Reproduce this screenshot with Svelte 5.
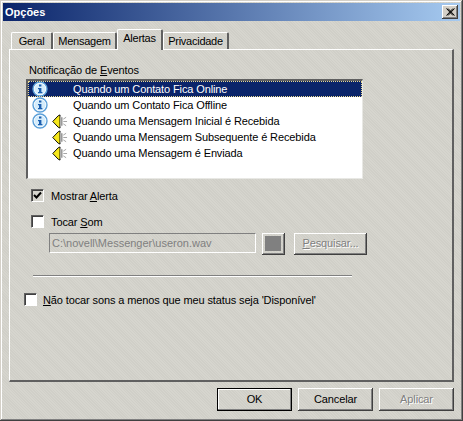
<script>
  const tabs = [
    { label: "Geral", width: 42, active: false },
    { label: "Mensagem", width: 64, active: false },
    { label: "Alertas", width: 46, active: true },
    { label: "Privacidade", width: 66, active: false },
  ];

  const events = [
    { text: "Quando um Contato Fica Online", info: true, sound: false },
    { text: "Quando um Contato Fica Offline", info: true, sound: false },
    { text: "Quando uma Mensagem Inicial é Recebida", info: true, sound: true },
    { text: "Quando uma Mensagem Subsequente é Recebida", info: false, sound: true },
    { text: "Quando uma Mensagem é Enviada", info: false, sound: true },
  ];
</script>

<div class="window">
  <div class="titlebar">
    <span class="title">Opções</span>
    <button class="close" aria-label="Fechar">
      <svg width="9" height="8" viewBox="0 0 9 8"><path d="M0.5 0.5 L7 7.5 M2 0.5 L8.5 7.5 M7 0.5 L0.5 7.5 M8.5 0.5 L2 7.5" stroke="#000" stroke-width="1" fill="none" /></svg>
    </button>
  </div>

  <div class="tabs">
    {#each tabs as tab}
      <div class="tab" class:active={tab.active} style="width: {tab.width}px">{tab.label}</div>
    {/each}
  </div>

  <div class="panel">
    <div class="group-label">Notificação de <u>E</u>ventos</div>
    <ul class="list">
      {#each events as ev, i}
        <li class:selected={i === 0}>
          <span class="slot info-slot">
            {#if ev.info}
              <svg width="16" height="16" viewBox="0 0 16 16">
                <circle cx="8" cy="8" r="7" fill="#fff" stroke="#5a9fd8" stroke-width="1.4" />
                <circle cx="8" cy="8" r="5.6" fill="#d4ecfb" />
                <rect x="7" y="3.5" width="2.4" height="2" fill="#1c5fb0" />
                <path d="M6 7h3.4v4h1v1.2h-4.4v-1.2h1v-2.8h-1z" fill="#1c5fb0" />
              </svg>
            {/if}
          </span>
          <span class="slot sound-slot">
            {#if ev.sound}
              <svg width="17" height="17" viewBox="0 0 17 17">
                <path d="M0.8 8.5 L6.5 2.5 L8.5 1.5 V15.5 L6.5 14.5 Z" fill="#f7e81c" stroke="#000" stroke-width="1" />
                <path d="M9.5 3 V14" stroke="#d8d8d8" stroke-width="1" />
                <path d="M10.5 4 V13" stroke="#606060" stroke-width="1" />
                <path d="M12 6 L15 4 M12 8.5 H16 M12 11 L15 13" stroke="#a0a0a0" stroke-width="1" fill="none" />
              </svg>
            {/if}
          </span>
          <span class="item-text">{ev.text}</span>
        </li>
      {/each}
    </ul>

    <label class="check first">
      <span class="box">
        <svg width="9" height="9" viewBox="0 0 9 9"><path d="M1 4 L3.5 6.5 L8 1.5" stroke="#000" stroke-width="2" fill="none" /></svg>
      </span>
      <span>Mostrar <u>A</u>lerta</span>
    </label>

    <label class="check second">
      <span class="box"></span>
      <span>Tocar <u>S</u>om</span>
    </label>

    <div class="sound-row">
      <div class="path">C:\novell\Messenger\useron.wav</div>
      <div class="swatch"><span></span></div>
      <div class="btn browse"><span class="disabled"><u>P</u>esquisar...</span></div>
    </div>

    <div class="sep"></div>

    <label class="check last">
      <span class="box"></span>
      <span><u>N</u>ão tocar sons a menos que meu status seja 'Disponível'</span>
    </label>
  </div>

  <div class="footer">
    <div class="btn default">OK</div>
    <div class="btn">Cancelar</div>
    <div class="btn"><span class="disabled">Aplicar</span></div>
  </div>
</div>

<style>
  :global(body) {
    margin: 0;
  }

  .window {
    box-sizing: border-box;
    width: 463px;
    height: 421px;
    padding: 3px;
    display: flex;
    flex-direction: column;
    background: repeating-linear-gradient(45deg, #d6d5ce 0 1px, #d0cfc8 1px 2px);
    box-shadow: inset -1px -1px 0 #404040, inset 1px 1px 0 #d4d0c8, inset -2px -2px 0 #808080, inset 2px 2px 0 #fff;
    font-family: "Liberation Sans", Arial, sans-serif;
    font-size: 11px;
    letter-spacing: -0.12px;
    color: #000;
  }

  .titlebar {
    height: 18px;
    flex: none;
    display: flex;
    align-items: center;
    justify-content: space-between;
    padding: 0 2px 0 2px;
    background: linear-gradient(90deg, #0a246a, #a6caf0);
    color: #fff;
  }

  .title {
    font-weight: bold;
    font-size: 11px;
    letter-spacing: 0;
  }

  .close {
    box-sizing: border-box;
    width: 16px;
    height: 14px;
    padding: 0;
    border: 0;
    display: flex;
    align-items: center;
    justify-content: center;
    background: #d4d0c8;
    box-shadow: inset -1px -1px 0 #404040, inset 1px 1px 0 #fff, inset -2px -2px 0 #808080;
  }

  .tabs {
    display: flex;
    align-items: flex-end;
    height: 28px;
    flex: none;
    padding-left: 8px;
  }

  .tab {
    box-sizing: border-box;
    height: 17px;
    padding-top: 2px;
    text-align: center;
    letter-spacing: -0.25px;
    border-top: 1px solid #fff;
    border-left: 1px solid #fff;
    border-right: 2px solid #606060;
    border-radius: 2px 2px 0 0;
  }

  .tab.active {
    height: 21px;
    padding-top: 2px;
    margin-bottom: -1px;
    position: relative;
    z-index: 1;
    background: repeating-linear-gradient(45deg, #d6d5ce 0 1px, #d0cfc8 1px 2px);
  }

  .panel {
    box-sizing: border-box;
    margin-left: 6px;
    width: 445px;
    height: 333px;
    flex: none;
    padding: 14px 16px 0;
    border-top: 1px solid #fff;
    border-left: 1px solid #fff;
    border-right: 2px solid #606060;
    border-bottom: 2px solid #606060;
  }

  .group-label {
    height: 15px;
    line-height: 13px;
    padding-left: 3px;
  }

  .list {
    box-sizing: border-box;
    list-style: none;
    margin: 0;
    padding: 0;
    width: 337px;
    height: 100px;
    background: #fff;
    border: 2px solid #606060;
    border-right: 1px solid #e8e8e4;
    border-bottom: 1px solid #e8e8e4;
  }

  .list li {
    display: flex;
    align-items: center;
    height: 16px;
    padding-left: 4px;
  }

  .list li.selected {
    height: 16px;
    background: #0a246a;
    color: #fff;
    outline: 1px dotted #e8d890;
    outline-offset: -1px;
  }

  .slot {
    display: flex;
    width: 16px;
    height: 16px;
    flex: none;
  }

  .sound-slot {
    margin-left: 4px;
    margin-right: 5px;
  }

  .check {
    display: flex;
    align-items: center;
    gap: 7px;
    height: 13px;
  }

  .check.first {
    margin: 10px 0 0 5px;
  }

  .check.second {
    margin: 13px 0 0 5px;
  }

  .check.last {
    margin: 17px 0 0 -2px;
    gap: 6px;
  }

  .box {
    box-sizing: border-box;
    width: 13px;
    height: 13px;
    flex: none;
    display: flex;
    align-items: center;
    justify-content: center;
    background: #fff;
    border: 1px solid;
    border-color: #606060 #fff #fff #606060;
    box-shadow: inset 1px 1px 0 #404040;
  }

  .box:has(svg) {
    background: #d6d5ce;
  }

  .sound-row {
    display: flex;
    margin: 5px 0 0 23px;
    height: 22px;
  }

  .path {
    box-sizing: border-box;
    width: 207px;
    height: 20px;
    padding: 3px 2px;
    color: #808080;
    letter-spacing: 0;
    border: 1px solid;
    border-color: #808080 #fff #fff #808080;
  }

  .swatch {
    box-sizing: border-box;
    width: 23px;
    height: 22px;
    margin-left: 6px;
    padding: 3px 4px 4px 3px;
    box-shadow: inset -1px -1px 0 #404040, inset 1px 1px 0 #fff, inset -2px -2px 0 #808080;
  }

  .swatch span {
    display: block;
    width: 100%;
    height: 100%;
    background: #808080;
  }

  .btn {
    box-sizing: border-box;
    width: 75px;
    height: 23px;
    padding-bottom: 2px;
    display: flex;
    align-items: center;
    justify-content: center;
    box-shadow: inset -1px -1px 0 #404040, inset 1px 1px 0 #fff, inset -2px -2px 0 #808080;
  }

  .btn.browse {
    width: 73px;
    height: 22px;
    margin-left: 9px;
  }

  .btn.default {
    border: 1px solid #000;
    box-shadow: inset -1px -1px 0 #808080, inset 1px 1px 0 #fff;
  }

  .disabled {
    color: #808080;
    text-shadow: 1px 1px 0 #fff;
  }

  .sep {
    width: 319px;
    height: 1px;
    margin: 20px 0 0 7px;
    background: #808080;
    box-shadow: 0 1px 0 #fff;
  }

  .footer {
    flex: none;
    display: flex;
    justify-content: flex-end;
    gap: 6px;
    margin-top: 6px;
    padding-right: 6px;
  }
</style>
